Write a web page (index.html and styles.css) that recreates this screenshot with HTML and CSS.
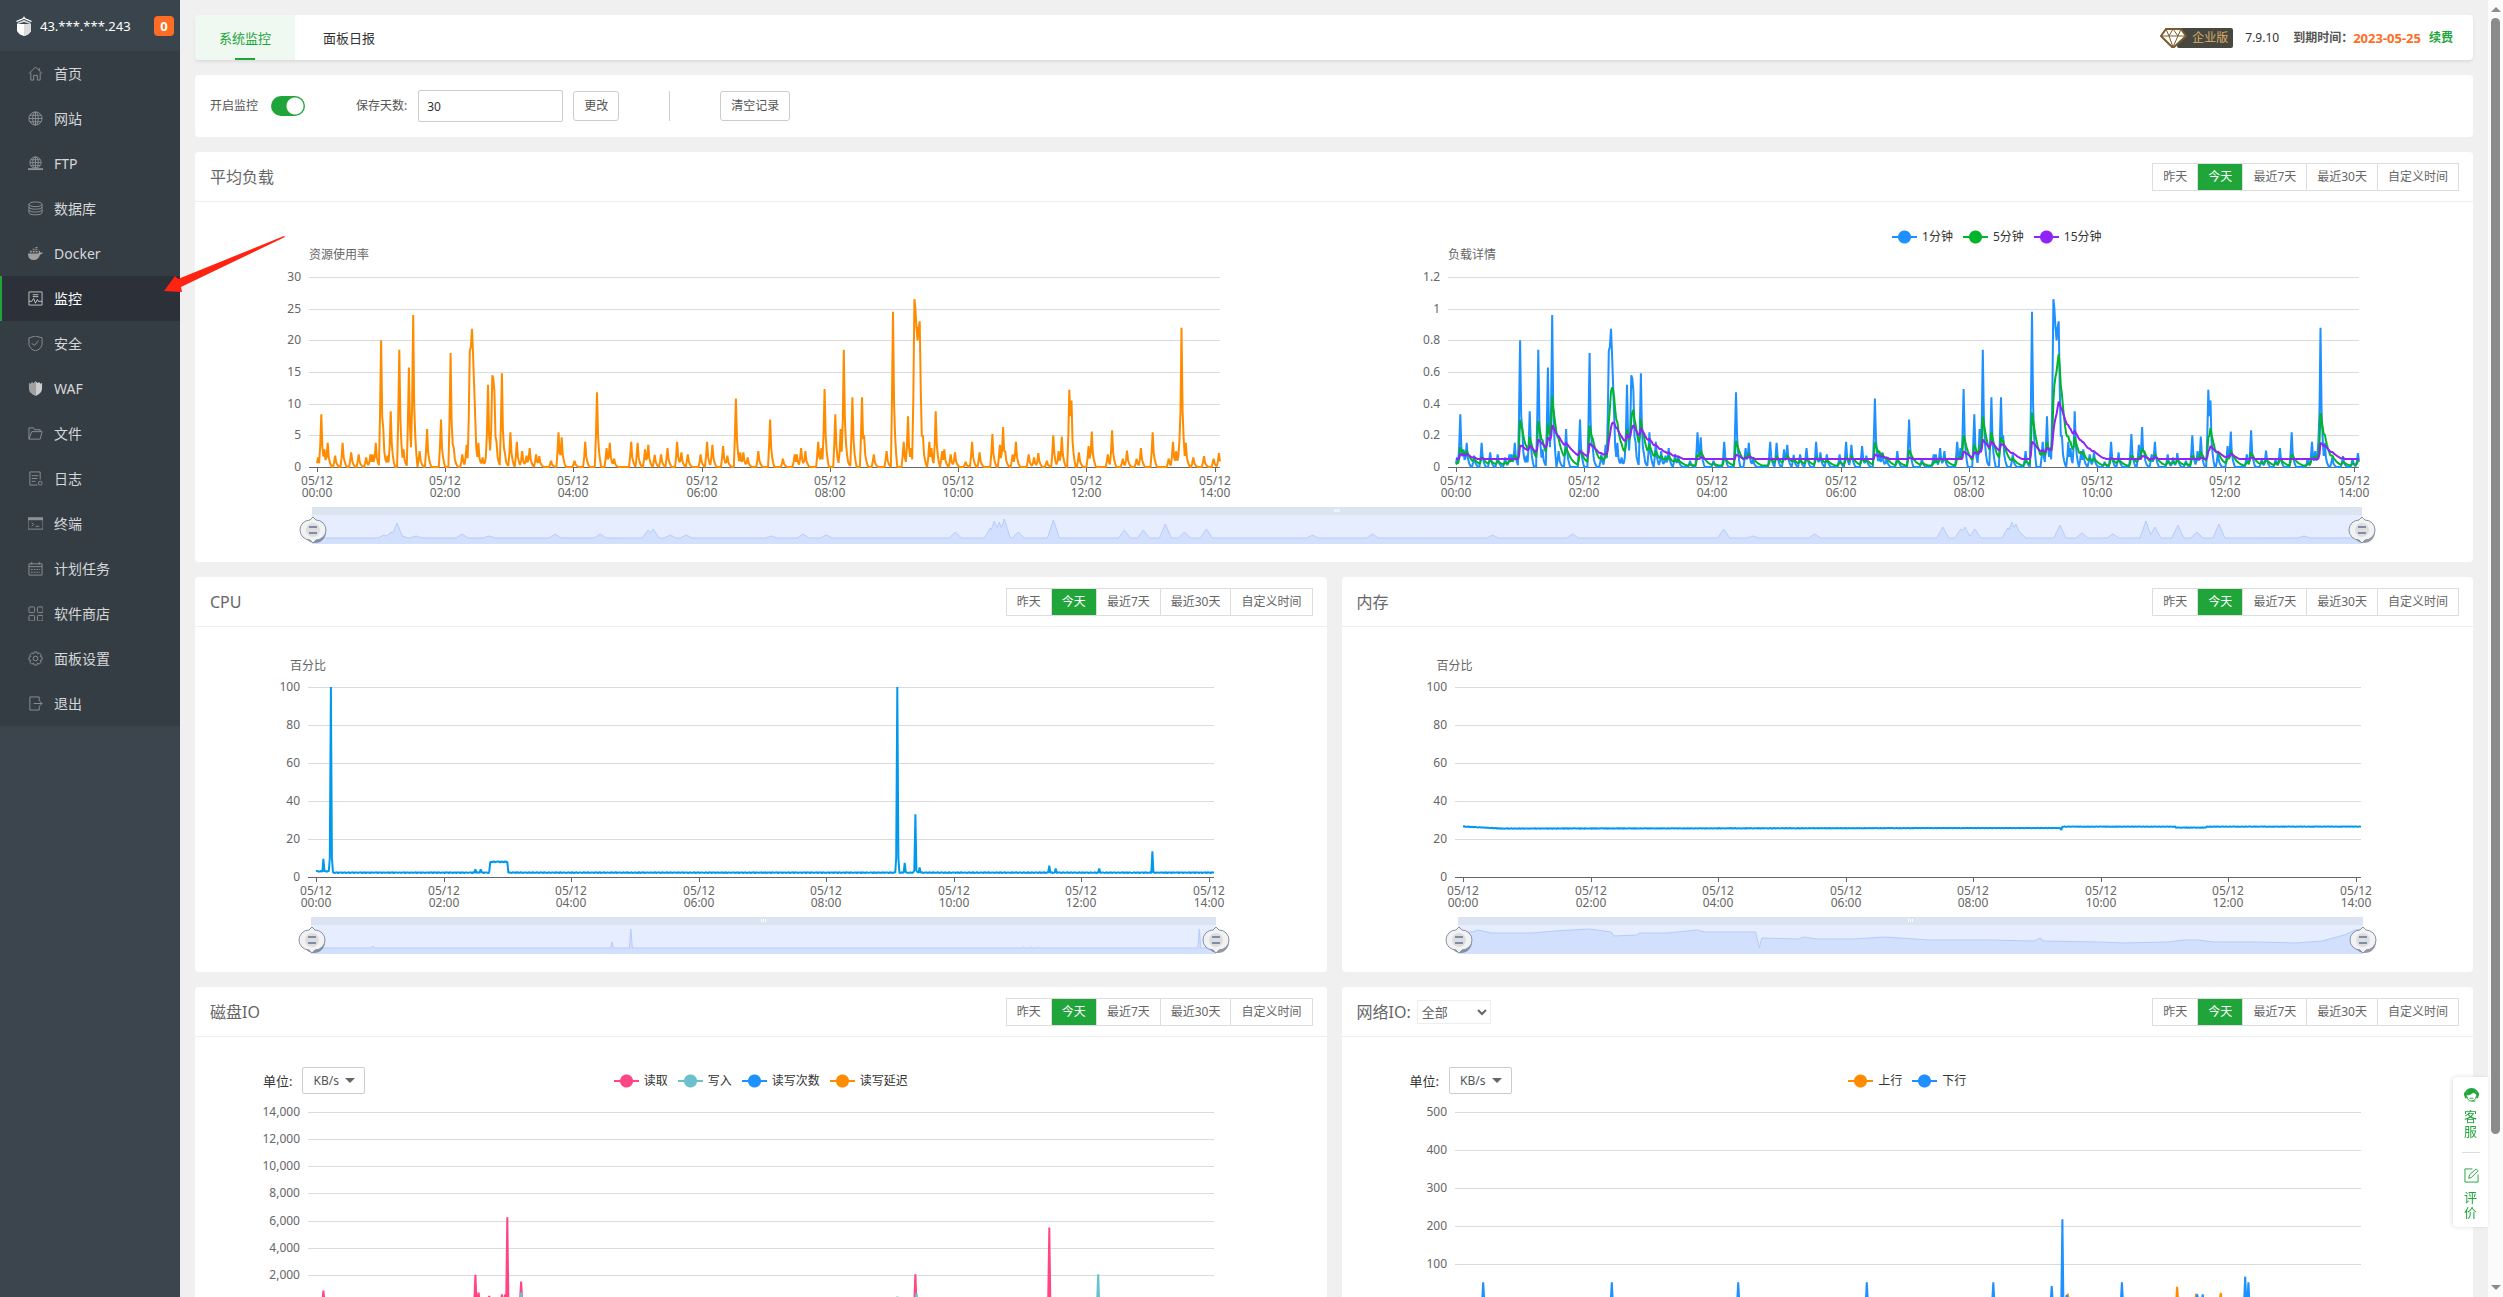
FILE: index.html
```
<!DOCTYPE html>
<html lang="zh-CN">

<head>
    <meta charset="utf-8">
    <meta name="viewport" content="width=device-width, initial-scale=1.0">
    <title>系统监控</title>
    <link rel="stylesheet" href="styles.css">
</head>

<body>

    <aside class="sidebar">
        <div class="server">
            <svg class="logo" viewBox="0 0 18 20"><path d="M9 0l1 2 7 3-1 1-7-3-7 3-1-1 7-3z" fill="#fff" /><path d="M9 4l7 3-1 1-6-2-6 2-1-1z" fill="#ddd" /><path d="M2 8h14v7q-2 4-7 5-5-1-7-5z" fill="#fff" /><path d="M9 8h7v7q-2 4-7 5z" fill="#dcdcdc" /></svg>
            <span>43.***.***.243</span>
            <b class="badge">0</b>
        </div>
        <nav class="menu">
            <a href="#"><svg viewBox="0 0 16 16"><path d="M1 8l7-7 7 7M3 7v8h3v-5h4v5h3V7M12 5V2" /></svg>首页</a>
            <a href="#"><svg viewBox="0 0 16 16"><circle cx="8" cy="8" r="7" /><ellipse cx="8" cy="8" rx="3" ry="7" /><path d="M1 8h14M8 1v14M2 4.500h12M2 11.500h12" /></svg>网站</a>
            <a href="#"><svg viewBox="0 0 16 16"><circle cx="8" cy="7" r="6" /><ellipse cx="8" cy="7" rx="3" ry="6" /><path d="M2 7h12M8 1v12M3 4h10M3 10h10" /><path d="M0 14h16" stroke-width="2" /></svg>FTP</a>
            <a href="#"><svg viewBox="0 0 16 16"><ellipse cx="8" cy="3.500" rx="7" ry="2.500" /><path d="M1 3.500v9c0 3 14 3 14 0v-9M1 6.500c0 3 14 3 14 0M1 9.500c0 3 14 3 14 0" /></svg>数据库</a>
            <a href="#"><svg viewBox="0 0 16 16" class="solid"><path d="M0 8h11q1-2 0-4 2 1 2 3h3q-1 2-3 2-2 6-7 6-6 0-6-7zM2 5h2v2H2zM5 5h2v2H5zM8 5h2v2H8zM5 3h2v1H5zM8 3h2v1H8zM8 1h2v1H8z" /></svg>Docker</a>
            <a href="#" class="active"><svg viewBox="0 0 16 16"><path d="M1 1h14v14H1zM5 4h6M5 6h6M1 11h3l2-3 2 5 2-4 1 2h4" /></svg>监控</a>
            <a href="#"><svg viewBox="0 0 16 16"><path d="M8 0l7 2v7q-1 5-7 7-6-2-7-7V2zM4 8l3 2 4-5" /></svg>安全</a>
            <a href="#"><svg viewBox="0 0 16 16" class="solid"><path d="M8 0v16q-7-3-7-8V2l2 1 1-2 2 1z" /><path d="M8 0v16q7-3 7-8V2l-2 1-1-2-2 1z" fill="#ccc" /></svg>WAF</a>
            <a href="#"><svg viewBox="0 0 16 16"><path d="M1 14V2h5l1 2h6v2M1 14L4 6h11l-2 8z" /></svg>文件</a>
            <a href="#"><svg viewBox="0 0 16 16"><path d="M10 15H2V1h11v8M4 5h7M4 8h6M4 11h4" /><circle cx="13" cy="13" r="2" /></svg>日志</a>
            <a href="#"><svg viewBox="0 0 16 16"><path d="M0 2h16v12H0zM4 7l2 2-2 2M8 11h4" /><path d="M0 3h16" stroke-width="3" /></svg>终端</a>
            <a href="#"><svg viewBox="0 0 16 16"><path d="M1 3h14v12H1zM1 6h14M4 1v3M12 1v3" /><path d="M3 9h10M3 12h10" stroke-dasharray="2 1" /></svg>计划任务</a>
            <a href="#"><svg viewBox="0 0 16 16"><rect x="1" y="1" width="6" height="6" rx="1" /><rect x="10" y="1" width="6" height="6" rx="1" /><rect x="1" y="10" width="6" height="6" rx="1" /><rect x="10" y="10" width="6" height="6" rx="1" /></svg>软件商店</a>
            <a href="#"><svg viewBox="0 0 16 16"><path d="M6.500 1h3l.5 2 2-1 2 2-1 2 2 .5v3l-2 .5 1 2-2 2-2-1-.5 2h-3L6 13l-2 1-2-2 1-2-2-.5v-3L3 6 2 4l2-2 2 1z" /><circle cx="8" cy="8" r="2.500" /></svg>面板设置</a>
            <a href="#"><svg viewBox="0 0 16 16"><path d="M12 5V1H2v14h10v-4M6 8h9M12 5l3 3-3 3" /></svg>退出</a>
        </nav>
    </aside>

    <main>
        <header class="card topbar">
            <a href="#" class="tab on">系统监控</a>
            <a href="#" class="tab">面板日报</a>
            <div class="version">
                <span class="edition">
                    <svg viewBox="0 0 27 20"><path d="M6 1h15l5 7-13 12L1 8z" fill="#fff" stroke="#7b5b2e" stroke-width="2" /><path d="M1 8h25M6 1l3 7 4 11 5-11 3-7M9 8l4-7 5 7" fill="none" stroke="#7b5b2e" /></svg>
                    <em>企业版</em>
                </span>
                <span class="number">7.9.10</span>
                <b>到期时间：</b><b class="date">2023-05-25</b><a href="#" class="renew">续费</a>
            </div>
        </header>

        <section class="card settings">
            <label for="power">开启监控</label>
            <input type="checkbox" id="power" class="switch" checked>
            <label for="days" class="days">保存天数:</label>
            <input type="text" id="days" value="30">
            <button>更改</button>
            <i class="divider"></i>
            <button>清空记录</button>
        </section>

        <section class="card">
            <div class="head">
                <h3>平均负载</h3>
                <div class="range"></div>
            </div>
            <div class="pair">
                <div>
                    <div class="legend"></div>
                    <p class="name">资源使用率</p>
                    <svg class="chart" data-chart="usage"></svg>
                </div>
                <div>
                    <div class="legend load-legend">
                        <span><i class="mark blue"></i>1分钟</span>
                        <span><i class="mark green"></i>5分钟</span>
                        <span><i class="mark purple"></i>15分钟</span>
                    </div>
                    <p class="name">负载详情</p>
                    <svg class="chart" data-chart="load"></svg>
                </div>
            </div>
            <svg class="zoom wide" data-zoom="load"></svg>
        </section>

        <div class="row">
            <section class="card">
                <div class="head">
                    <h3>CPU</h3>
                    <div class="range"></div>
                </div>
                <p class="name percent">百分比</p>
                <svg class="chart" data-chart="cpu"></svg>
                <svg class="zoom" data-zoom="cpu"></svg>
            </section>
            <section class="card">
                <div class="head">
                    <h3>内存</h3>
                    <div class="range"></div>
                </div>
                <p class="name percent">百分比</p>
                <svg class="chart" data-chart="memory"></svg>
                <svg class="zoom" data-zoom="memory"></svg>
            </section>
        </div>

        <div class="row">
            <section class="card">
                <div class="head">
                    <h3>磁盘IO</h3>
                    <div class="range"></div>
                </div>
                <div class="tools">
                    <div class="unit">
                        <label for="disk-unit">单位:</label>
                        <span class="picker"><select id="disk-unit"><option>KB/s</option><option>MB/s</option></select></span>
                    </div>
                    <div class="legend">
                        <span><i class="mark pink"></i>读取</span>
                        <span><i class="mark teal"></i>写入</span>
                        <span><i class="mark blue"></i>读写次数</span>
                        <span><i class="mark orange"></i>读写延迟</span>
                    </div>
                </div>
                <svg class="chart" data-chart="disk"></svg>
                <svg class="zoom" data-zoom="cpu"></svg>
            </section>
            <section class="card">
                <div class="head">
                    <h3><label for="card-io">网络IO:</label></h3>
                    <select id="card-io" class="all"><option>全部</option></select>
                    <div class="range"></div>
                </div>
                <div class="tools">
                    <div class="unit">
                        <label for="net-unit">单位:</label>
                        <span class="picker"><select id="net-unit"><option>KB/s</option><option>MB/s</option></select></span>
                    </div>
                    <div class="legend">
                        <span><i class="mark orange"></i>上行</span>
                        <span><i class="mark blue"></i>下行</span>
                    </div>
                </div>
                <svg class="chart" data-chart="net"></svg>
                <svg class="zoom" data-zoom="cpu"></svg>
            </section>
        </div>
    </main>

    <div class="scrollbar"><i class="up"></i><i class="thumb"></i><i class="down"></i></div>

    <div class="service">
        <a href="#"><svg viewBox="0 0 16 16"><path d="M1 9a7 7 0 0 1 14 0" fill="none" stroke="#20a53a" stroke-width="2" /><path d="M0 6h3v6H1zM13 6h3l-1 6h-2zM3 8q0-6 5-6t5 6l-3-2-3 2-3 1z" fill="#20a53a" /><path d="M3 10q1 5 5 5t5-5M6 12h4M8 15h4" fill="none" stroke="#20a53a" /></svg>客服</a>
        <a href="#"><svg viewBox="0 0 16 16"><path d="M9 1H1v14h14V7M5 11l1-4 7-6 2 2-7 7z" fill="none" stroke="#20a53a" /></svg>评价</a>
    </div>

    <svg class="pointer" viewBox="0 0 124 60"><path d="M1 56L12 41 15 44 121 1 122 2 18 52 19 57z" fill="#ff2312" /></svg>

    <template>
        <button>昨天</button><button class="on">今天</button><button>最近7天</button><button>最近30天</button><button>自定义时间</button>
    </template>

    <script src="script.js"></script>
</body>

</html>
```
FILE: styles.css
```
* {
    box-sizing: border-box;
}

body {
    margin: 0;
    height: 100vh;
    display: flex;
    overflow: hidden;
    background: #f0f0f0;
    color: #555;
    font: 12px/18px "Noto Sans", "Noto Sans CJK SC", sans-serif;
}

a {
    color: inherit;
    text-decoration: none;
}

h3, p {
    margin: 0;
    font-weight: normal;
}

button, input, select {
    font: inherit;
    color: inherit;
}

/* sidebar */

.sidebar {
    width: 180px;
    flex: none;
    background: #3c444d;
}

.server {
    display: flex;
    align-items: center;
    height: 51px;
    padding: 0 6px 0 15px;
    background: #3a444c;
    color: #fff;
    font-size: 13px;
}

.logo {
    width: 18px;
    height: 20px;
    margin-right: 7px;
}

.badge {
    width: 20px;
    height: 20px;
    margin-left: auto;
    border-radius: 4px;
    background: #ff6c23;
    line-height: 20px;
    text-align: center;
}

.menu a {
    display: flex;
    align-items: center;
    height: 45px;
    padding-left: 28px;
    background: #353d44;
    color: #d6d7d9;
    font-size: 14px;
}

.menu svg {
    width: 15px;
    height: 15px;
    margin-right: 11px;
    fill: none;
    stroke: #8d9194;
}

.menu .solid {
    fill: #a0a0a0;
    stroke: none;
}

.menu .active {
    padding-left: 26px;
    border-left: 2px solid #20a53a;
    background: #2c3038;
    color: #fff;
}

.menu .active svg {
    stroke: #c8c8c8;
}

/* page */

main {
    flex: 1;
    min-width: 0;
    padding: 15px;
    overflow-y: auto;
    scrollbar-width: none;
}

.card {
    margin-bottom: 15px;
    padding-bottom: 18px;
    border-radius: 4px;
    background: #fff;
}

.topbar {
    display: flex;
    height: 45px;
    padding: 0 20px 0 0;
    box-shadow: 0 2px 3px #ddd;
}

.tab {
    width: 100px;
    margin-right: 4px;
    color: #333;
    font-size: 13px;
    line-height: 46px;
    text-align: center;
}

.tab.on {
    border-radius: 4px 0 0 4px;
    background: linear-gradient(#20a53a, #20a53a) center bottom / 20px 2px no-repeat #eff8f1;
    color: #20a53a;
}

.version {
    display: flex;
    align-items: center;
    margin-left: auto;
}

.edition {
    display: flex;
    height: 20px;
}

.edition svg {
    width: 27px;
    z-index: 1;
}

.edition em {
    margin-left: -10px;
    padding: 0 5px 0 15px;
    border-radius: 2px;
    background: #48473f;
    color: #d8ae6a;
    font-style: normal;
    line-height: 20px;
}

.number {
    margin: 0 14px 0 12px;
    color: #333;
}

.date {
    color: #ff6c23;
    font-size: 13px;
}

.renew {
    margin-left: 8px;
    color: #20a53a;
    font-weight: bold;
}

.settings {
    display: flex;
    align-items: center;
    height: 62px;
    padding: 0 15px;
}

.switch {
    appearance: none;
    width: 34px;
    height: 20px;
    margin: 0 0 0 13px;
    border-radius: 10px;
    background: radial-gradient(circle at 24px 10px, #fff 8px, #20a53a 9px);
}

.days {
    margin: 0 11px 0 51px;
}

.settings input[type=text] {
    width: 145px;
    height: 32px;
    margin-right: 10px;
    padding: 0 8px;
    border: 1px solid #ccc;
    border-radius: 2px;
    color: #333;
}

.settings button {
    height: 30px;
    padding: 0 10px;
    border: 1px solid #ccc;
    border-radius: 3px;
    background: #fff;
}

.divider {
    width: 1px;
    height: 30px;
    margin: 0 50px;
    background: #ccc;
}

.row {
    display: grid;
    grid-template-columns: 1fr 1fr;
    gap: 15px;
}

.head {
    display: flex;
    align-items: center;
    height: 50px;
    padding: 0 14px 0 15px;
    border-bottom: 1px solid #eee;
    color: #666;
}

.head h3 {
    font-size: 16px;
}

.all {
    width: 74px;
    height: 24px;
    margin-left: 6px;
    border: 1px solid #eee;
    background: #fff;
    font-size: 13px;
}

.range {
    display: flex;
    margin-left: auto;
    border: 1px solid #ddd;
}

.range button {
    height: 26px;
    padding: 0 10px;
    border: 0;
    border-right: 1px solid #ddd;
    background: #fff;
}

.range button:last-child {
    border-right: 0;
}

.range .on {
    background: #20a53a;
    color: #fff;
}

/* charts */

.pair {
    display: grid;
    grid-template-columns: 1fr 1fr;
    padding-top: 26px;
}

.pair .legend {
    height: 18px;
}

.name {
    height: 21px;
    padding-left: 10%;
    line-height: 18px;
    color: #666;
}

.percent {
    height: 50px;
    padding: 30px 0 0 95px;
}

.chart {
    display: block;
    width: 100%;
    height: 240px;
    fill: #666;
}

.zoom {
    display: block;
    width: 80%;
    height: 37px;
    margin-left: calc(10% + 3px);
    overflow: visible;
}

.zoom.wide {
    width: 90%;
    margin-left: calc(5% + 3px);
}

.tools {
    display: grid;
    grid-template-columns: 1fr auto 1fr;
    align-items: center;
    height: 65px;
    padding: 30px 0 0 68px;
    align-content: start;
}

.tools .legend {
    margin-right: 68px;
}

.unit {
    display: flex;
    align-items: center;
    gap: 10px;
    color: #333;
    font-size: 13px;
}

.picker {
    position: relative;
}

.picker::after {
    content: "";
    position: absolute;
    right: 10px;
    top: 11px;
    border: 5px solid transparent;
    border-top-color: #666;
}

.picker select {
    appearance: none;
    display: block;
    width: 63px;
    height: 27px;
    padding: 0 10px;
    border: 1px solid #ccc;
    border-radius: 2px;
    background: #fff;
    color: #555;
    font-size: 12px;
}

.legend {
    display: flex;
    gap: 10px;
    color: #333;
}

.load-legend {
    margin-left: 49%;
}

.legend span {
    display: flex;
    align-items: center;
    white-space: nowrap;
}

.mark {
    width: 25px;
    height: 14px;
    margin-right: 5px;
    color: #1e90ff;
    background: radial-gradient(circle, currentColor 6px, transparent 7px), linear-gradient(currentColor, currentColor) center / 25px 2px no-repeat;
}

.green { color: #00b52a; }
.purple { color: #9023f8; }
.pink { color: #ff4683; }
.teal { color: #6bc0ce; }
.orange { color: #ff8c00; }

/* right edge */

.scrollbar {
    display: flex;
    flex-direction: column;
    align-items: center;
    width: 15px;
    flex: none;
    padding: 7px 0;
    background: #fbfbfb;
}

.up, .down {
    border: 5px solid transparent;
    border-top: 0;
    border-bottom-color: #8b8b8b;
}

.down {
    margin-top: auto;
    border-top: 5px solid #8b8b8b;
    border-bottom: 0;
}

.thumb {
    width: 9px;
    height: 87%;
    margin-top: 6px;
    border-radius: 5px;
    background: #8b8b8b;
}

.service {
    position: fixed;
    right: 15px;
    bottom: 70px;
    width: 35px;
    height: 150px;
    padding: 0 9px;
    border-radius: 4px 0 0 4px;
    background: #fff;
    box-shadow: -1px 0 4px #ddd;
    color: #20a53a;
    font-size: 13px;
    line-height: 15px;
}

.service a {
    display: block;
    width: 18px;
    height: 75px;
    padding: 10px 2px 0;
}

.service a + a {
    padding-top: 15px;
    border-top: 1px solid #ddd;
}

.service svg {
    display: block;
    width: 15px;
    height: 15px;
    margin-bottom: 7px;
}

.pointer {
    position: fixed;
    left: 163px;
    top: 235px;
    width: 124px;
    height: 60px;
}
```
FILE: script.js
```
const MINUTES = 845;

// [minute, value] pairs
const usagePeaks = [[1,1.5],[4,8.3],[7,2.8],[10,3.8],[17,1.8],[24,3.8],[32,2.3],[39,2],[46,1.5],[50,2],[52,2],[55,3.8],[60,20],[62,6],[66,1.8],[69,8.8],[77,18.5],[81,2.8],[86,15.7],[90,24],[96,2.5],[103,6],[116,7.5],[125,18],[128,3],[136,2],[140,3.5],[143,18.3],[144,19],[145,21.8],[146,18],[147,13],[148,8],[151,3.8],[155,1.5],[158,1.5],[160,13],[164,14.5],[165,14],[166,12],[168,4],[173,14.8],[176,2],[181,5.5],[187,4],[192,2.5],[196,1.8],[199,3],[205,2],[208,1.7],[219,1],[226,5.5],[229,4.7],[241,1],[251,4],[262,11.8],[271,3],[274,3.8],[278,1.3],[294,4],[300,3.8],[307,2.8],[310,3.5],[316,1.9],[322,2],[328,3],[337,4],[341,2.3],[347,2],[359,2],[365,4],[370,3.5],[380,3.3],[384,1.8],[392,10.8],[396,2.3],[399,2.3],[403,1.5],[413,2.5],[424,7.5],[436,1.3],[447,2],[449,2],[453,3],[457,2.5],[469,4],[472,3],[475,12.3],[485,8.3],[490,6],[493,18.5],[496,2],[501,11],[510,11],[512,5],[521,2],[533,2.5],[539,24.5],[549,4],[553,8],[556,3],[559,26.5],[560,25],[561,22],[562,20],[563,22],[564,23],[565,12],[567,5],[573,4],[575,3],[579,8.8],[585,2.5],[587,2.8],[593,2],[597,2.3],[607,0.8],[613,4],[620,2.3],[632,5.2],[639,3.5],[642,6.3],[644,2.5],[651,2],[654,4],[666,2],[671,1.5],[675,2.2],[683,1],[689,5],[694,2.5],[697,4.8],[704,12.2],[705,8],[706,10.5],[713,2.3],[722,3.3],[725,5.6],[740,2],[744,5.8],[754,1.3],[758,2.6],[767,1.3],[771,3],[782,5.5],[797,1.3],[801,4],[804,2.5],[807,4],[809,22],[813,3.8],[820,1.5],[830,1.7],[839,1.3],[844,2.2]];

function spikes(peaks, shape, base) {
    const list = [];
    for (let i = 0; i <= MINUTES; i++) list.push(base ? base(i) : 0);
    peaks.forEach(([at, value]) => {
        shape.forEach(([offset, part]) => {
            const i = at + offset;
            if (i >= 0 && i <= MINUTES) list[i] = Math.max(list[i], value * part);
        });
    });
    return list;
}

const slow = [[-1, 0.4], [0, 1], [1, 0.4], [2, 0.2], [3, 0.08]];
const sharp = [[0, 1]];
const usage = spikes(usagePeaks, slow);
const load1 = usage.map(v => v / 25);

// 5 and 15 minute averages follow the 1 minute load
function average(decay, floor) {
    let value = floor;
    return load1.map((v, i) => {
        const last = i ? load1[i - 1] : 0;
        const queue = Math.max(0, (v - last * 0.37) / 0.63);
        value = value * decay + queue * (1 - decay);
        return Math.max(floor, value);
    });
}

const wobble = i => (Math.sin(i * 1.7) + Math.sin(i * 2.9)) / 2;

const cpu = spikes([[7, 9.5], [14, 100], [150, 4], [155, 4], [547, 100], [554, 7.5], [564, 33], [568, 5], [690, 6], [696, 4.5], [737, 4.5], [787, 13.5]], [[-1, 0.1], [0, 1], [1, 0.1]],
    i => i >= 164 && i <= 180 ? 8 + wobble(i) * 0.4 : (i < 13 ? 3 : 2.3) + wobble(i) * 0.3);

const memory = spikes([], sharp, i => {
    let v = 25.5 + i / 2000;
    if (i < 40) v = 26.6 - i * 0.03;
    if (i > 563) v = 26.5;
    if (i > 670 && i < 700) v = 26;
    if (i == 563) v = 24.8;
    return v + wobble(i) * 0.15;
});

const charts = {
    usage: { ticks: [0, 5, 10, 15, 20, 25, 30], lines: [["#ff8c00", usage]] },
    load: {
        ticks: [0, 0.2, 0.4, 0.6, 0.8, 1, 1.2],
        lines: [["#1e90ff", load1], ["#00b52a", average(0.82, 0.01)], ["#9023f8", average(0.935, 0.05)]]
    },
    cpu: { ticks: [0, 20, 40, 60, 80, 100], lines: [["#0099ee", cpu]] },
    memory: { ticks: [0, 20, 40, 60, 80, 100], lines: [["#0099ee", memory]] },
    disk: {
        ticks: [0, 2000, 4000, 6000, 8000, 10000, 12000, 14000],
        lines: [
            ["#ff4683", spikes([[7, 850], [150, 2000], [153, 700], [163, 450], [175, 550], [178, 550], [180, 6250], [193, 1500], [564, 2050], [690, 5500]], sharp)],
            ["#6bc0ce", spikes([[193, 700], [547, 400], [565, 650], [736, 2050]], sharp)]
        ]
    },
    net: {
        ticks: [0, 100, 200, 300, 400, 500],
        lines: [
            ["#ff8c00", spikes([[569, 22], [672, 40], [690, 22], [713, 24]], sharp)],
            ["#1e90ff", spikes([[19, 52], [140, 52], [259, 52], [380, 52], [499, 52], [554, 42], [564, 218], [568, 18], [620, 52], [691, 20], [696, 20], [736, 67], [739, 52]], sharp)]
        ]
    }
};

function drawChart(svg) {
    const chart = charts[svg.dataset.chart];
    const width = svg.clientWidth;
    const left = Math.round(width * 0.1);
    const right = Math.round(width * 0.9);
    const max = chart.ticks[chart.ticks.length - 1];
    const x = m => left + 8 + m * (right - left - 8) / MINUTES;
    const y = v => 200 - v / max * 190;
    let html = "";

    chart.ticks.forEach(v => {
        const line = Math.round(y(v)) + 0.5;
        html += `<path d="M${left} ${line}H${right}" stroke="${v ? "#dbdbdb" : "#666"}"/>`;
        html += `<text x="${left - 8}" y="${line + 3}" text-anchor="end">${v.toLocaleString("en-US")}</text>`;
    });

    for (let h = 0; h <= 14; h += 2) {
        const at = Math.round(x(h * 60));
        html += `<path d="M${at + 0.5} 200v5" stroke="#666"/>`;
        html += `<text x="${at}" y="218" text-anchor="middle">05/12</text>`;
        html += `<text x="${at}" y="230" text-anchor="middle">${String(h).padStart(2, "0")}:00</text>`;
    }

    chart.lines.forEach(([color, values]) => {
        const points = values.map((v, i) => x(i).toFixed(1) + "," + y(v).toFixed(1)).join(" ");
        html += `<polyline points="${points}" fill="none" stroke="${color}" stroke-width="2" stroke-linejoin="bevel"/>`;
    });
    svg.innerHTML = html;
}

// slider previews: [position in px, height], on a track of the given length
const zooms = {
    load: {
        length: 2049,
        spread: 6,
        peaks: [[72,3],[79,6],[85,15],[90,2],[104,2],[150,4],[177,2],[243,4],[288,4],[336,8],[341,9],[358,3],[374,3],[459,2],[491,4],[514,3],[643,6],[678,10],[682,17],[687,16],[692,19],[706,6],[741,18],[812,8],[831,8],[853,14],[872,6],[894,9],[1000,3],[1060,4],[1180,3],[1260,4],[1411,9],[1440,2],[1502,4],[1630,11],[1648,9],[1652,11],[1662,9],[1695,10],[1699,16],[1703,14],[1707,6],[1747,13],[1769,5],[1800,4],[1833,17],[1842,11],[1865,13],[1884,6],[1906,14],[1991,2]]
    },
    cpu: { length: 1245, spread: 2, peaks: [[85,2],[414,6],[440,19],[980,1],[990,1],[1000,1],[1222,19]] },
    memory: {
        length: 1210,
        points: [[0,22],[20,22],[26,24],[45,21],[100,21],[130,23],[175,25],[205,22],[208,18],[240,19],[242,21],[280,21],[320,24],[330,22],[398,22],[403,6],[406,16],[455,15],[462,17],[480,15],[530,15],[570,17],[610,15],[630,14],[710,14],[770,13],[779,16],[782,13],[855,12],[890,11],[950,12],[970,14],[990,14],[1010,12],[1070,12],[1120,11],[1155,13],[1170,16],[1185,19],[1200,24],[1210,25]]
    }
};

function handle(x) {
    return `<g transform="translate(${x} 23)">
        <circle cx="2" cy="2" r="11" fill="#556" opacity=".6"/>
        <path d="M0-13l3 3a10 10 0 0 1 0 20l-3 3-3-3a10 10 0 0 1 0-20z" fill="#f2f2f2" stroke="#8592aa"/>
        <circle r="7" fill="#ddd"/><path d="M-4-3h8M-4 3h8" stroke="#7d8ca8" stroke-width="2"/></g>`;
}

function drawZoom(svg) {
    const zoom = zooms[svg.dataset.zoom];
    const width = svg.clientWidth;
    let points = zoom.points;
    if (!points) {
        // overlapping peaks merge into one outline
        points = [];
        for (let x = 0; x <= zoom.length; x++) {
            let top = 0;
            zoom.peaks.forEach(([at, h]) => top = Math.max(top, h * (1 - Math.abs(x - at) / zoom.spread)));
            points.push([x, 6 + top]);
        }
    }
    const line = points.map(([x, h]) => (x * width / zoom.length).toFixed(1) + " " + (37 - h).toFixed(1)).join("L");
    const mid = width / 2;
    svg.innerHTML = `<rect width="${width}" height="37" fill="#e6edfe"/>
        <rect width="${width}" height="8" fill="#dce4f1"/>
        <path d="M0 37L${line}L${width} 37z" fill="#d3e0fd"/>
        <path d="M${line}" fill="none" stroke="#b4cbfa"/>
        <path d="M${mid - 2} 2v3M${mid} 2v3M${mid + 2} 2v3" stroke="#fff"/>` + handle(1) + handle(width);
}

function draw() {
    document.querySelectorAll(".chart").forEach(drawChart);
    document.querySelectorAll(".zoom").forEach(drawZoom);
}

document.querySelectorAll(".range").forEach(range => {
    range.appendChild(document.querySelector("template").content.cloneNode(true));
    range.addEventListener("click", e => {
        if (e.target.tagName != "BUTTON") return;
        range.querySelector(".on").classList.remove("on");
        e.target.classList.add("on");
    });
});

window.addEventListener("resize", draw);
draw();
```
